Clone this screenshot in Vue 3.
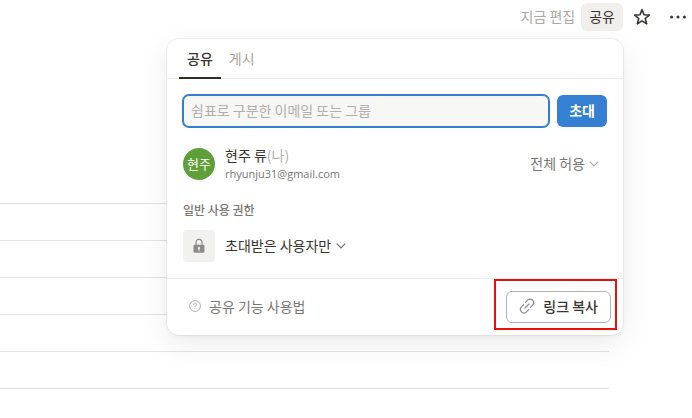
<template>
  <div class="page">
    <header class="topbar">
      <span class="edited">지금 편집</span>
      <button class="share-btn" type="button">공유</button>
      <button class="icon-btn star-btn" type="button" aria-label="즐겨찾기">
        <svg width="20" height="20" viewBox="0 0 20 20" fill="none" stroke="currentColor" stroke-width="1.6" stroke-linejoin="round">
          <path d="M10 2.6 L12 7.8 L17.4 8.1 L13.2 11.5 L14.7 16.8 L10 13.8 L5.3 16.8 L6.8 11.5 L2.6 8.1 L8 7.8 Z" />
        </svg>
      </button>
      <button class="icon-btn more-btn" type="button" aria-label="더 보기">
        <svg width="20" height="20" viewBox="0 0 20 20" fill="currentColor">
          <circle cx="3.6" cy="10" r="1.5" />
          <circle cx="10" cy="10" r="1.5" />
          <circle cx="16.4" cy="10" r="1.5" />
        </svg>
      </button>
    </header>

    <main class="rows">
      <div v-for="n in 6" :key="n" class="row"></div>
    </main>

    <section class="popover" role="dialog" aria-label="공유">
      <nav class="tabs">
        <button
          v-for="tab in tabs"
          :key="tab"
          type="button"
          class="tab"
          :class="{ active: tab === activeTab }"
          @click="activeTab = tab"
        >{{ tab }}</button>
      </nav>

      <div class="content">
        <form class="invite" @submit.prevent>
          <input
            v-model="emails"
            class="invite-input"
            type="text"
            aria-label="이메일 또는 그룹"
            placeholder="쉼표로 구분한 이메일 또는 그룹"
          />
          <button class="invite-btn" type="submit">초대</button>
        </form>

        <div class="member">
          <span class="avatar">현주</span>
          <div class="member-info">
            <span class="member-name">현주 류<span class="me">(나)</span></span>
            <span class="member-email">rhyunju31@gmail.com</span>
          </div>
          <button class="permission" type="button">
            전체 허용
            <svg class="chevron light" width="10" height="10" viewBox="0 0 10 10" fill="none" stroke="currentColor" stroke-width="1.2">
              <path d="M0.8 3.6 L5 7.8 L9.2 3.6" />
            </svg>
          </button>
        </div>

        <h2 class="section-title">일반 사용 권한</h2>
        <div class="access">
          <span class="lock">
            <svg width="14" height="16" viewBox="0 0 14 16">
              <path d="M4 7 V4.6 C4 2.4 5.2 1.4 7 1.4 C8.8 1.4 10 2.4 10 4.6 V7" fill="none" stroke="currentColor" stroke-width="1.2" />
              <rect x="1.5" y="6.8" width="11" height="8" rx="1.4" fill="currentColor" />
              <path d="M7 9.4 V12.2" stroke="#f1f1f0" stroke-width="1.2" stroke-linecap="round" />
              <circle cx="7" cy="10" r="1.1" fill="#f1f1f0" />
            </svg>
          </span>
          <button class="access-btn" type="button">
            초대받은 사용자만
            <svg class="chevron" width="10" height="10" viewBox="0 0 10 10" fill="none" stroke="currentColor" stroke-width="1.2">
              <path d="M0.8 3.6 L5 7.8 L9.2 3.6" />
            </svg>
          </button>
        </div>
      </div>

      <footer class="popover-footer">
        <a class="help" href="#">
          <svg width="12" height="12" viewBox="0 0 12 12" fill="none" stroke="currentColor">
            <circle cx="6" cy="6" r="5.4" stroke-width="1" />
            <path d="M4.4 4.8 C4.4 3.8 5.1 3.2 6 3.2 C6.9 3.2 7.6 3.8 7.6 4.6 C7.6 5.6 6 5.7 6 7" stroke-width="1" />
            <circle cx="6" cy="8.6" r="0.6" fill="currentColor" stroke="none" />
          </svg>
          공유 기능 사용법
        </a>
        <div class="copy">
          <button class="copy-btn" type="button">
            <svg width="16" height="16" viewBox="0 0 16 16" fill="none" stroke="currentColor" stroke-width="1.2" stroke-linecap="round">
              <path d="M6.4 4.4 L8.6 2.2 C10 0.8 12.2 0.8 13.6 2.2 C15 3.6 15 5.8 13.6 7.2 L11.4 9.4" />
              <path d="M9.6 11.6 L7.4 13.8 C6 15.2 3.8 15.2 2.4 13.8 C1 12.4 1 10.2 2.4 8.8 L4.6 6.6" />
              <path d="M6 10 L10 6" />
            </svg>
            링크 복사
          </button>
          <span class="highlight"></span>
        </div>
      </footer>
    </section>
  </div>
</template>

<script setup>
import { ref } from 'vue'

const tabs = ['공유', '게시']
const activeTab = ref('공유')
const emails = ref('')
</script>

<style>
body {
  background: #fff;
}
</style>

<style scoped>
.page {
  position: relative;
  min-height: 100vh;
  box-sizing: border-box;
  overflow: hidden;
  color: #37352f;
  font-family: "Noto Sans CJK KR", sans-serif;
  font-size: 14px;
  line-height: 20px;
}
button {
  box-sizing: border-box;
  padding: 0;
  border: 0;
  background: none;
  color: inherit;
  font: inherit;
  white-space: nowrap;
  cursor: pointer;
}
svg {
  flex: none;
}
.topbar {
  display: flex;
  align-items: center;
  justify-content: flex-end;
  height: 34px;
  padding-right: 4px;
}
.edited {
  margin-right: 6px;
  padding-bottom: 2px;
  color: #a9a8a5;
}
.share-btn {
  height: 28px;
  padding: 0 8px 2px;
  border-radius: 6px;
  background: #f0efee;
}
.icon-btn {
  display: flex;
}
.star-btn {
  margin-left: 9px;
}
.more-btn {
  margin-left: 16px;
}
.rows {
  margin: 133px 83px 0 0;
}
.row {
  height: 36px;
  border-bottom: 1px solid #e4e4e3;
}
.popover {
  position: absolute;
  top: 39px;
  right: 69px;
  width: 456px;
  max-width: calc(100% - 80px);
  border-radius: 12px;
  background: #fff;
  box-shadow: 0 0 0 1px rgba(15, 15, 15, 0.05), 0 3px 6px rgba(15, 15, 15, 0.03), 0 9px 30px rgba(15, 15, 15, 0.08);
}
.tabs {
  display: flex;
  height: 39px;
  padding: 0 12px;
  border-bottom: 1px solid #ededec;
}
.tab {
  height: 40px;
  padding: 0 8px;
  border-bottom: 2px solid transparent;
  color: #a5a4a1;
}
.tab.active {
  border-color: #2f2d2a;
  color: #37352f;
  font-weight: 500;
}
.content {
  padding: 16px;
}
.invite {
  display: flex;
  gap: 8px;
}
.invite-input {
  flex: 1;
  min-width: 0;
  height: 32px;
  box-sizing: border-box;
  padding: 0 7px 2px;
  border: 1px solid #327fd0;
  border-radius: 6px;
  outline: 0;
  background: #f7f7f5;
  box-shadow: 0 0 0 1px #327fd0;
  color: inherit;
  font: inherit;
}
.invite-input::placeholder {
  color: #b0afac;
  opacity: 1;
}
.invite-btn {
  height: 32px;
  padding: 0 12px 2px;
  border-radius: 6px;
  background: #3580d2;
  color: #fff;
  font-weight: 700;
}
.member {
  display: flex;
  align-items: center;
  gap: 10px;
  margin-top: 18px;
}
.avatar {
  display: flex;
  align-items: center;
  justify-content: center;
  width: 32px;
  height: 32px;
  border-radius: 50%;
  background: #5f9f37;
  color: #fff;
  font-size: 13px;
}
.member-info {
  display: flex;
  flex: 1;
  flex-direction: column;
}
.me {
  color: #b0afac;
}
.member-email {
  color: #787774;
  font-family: "Open Sans", "Noto Sans CJK KR", sans-serif;
  font-size: 11px;
  line-height: 18px;
}
.permission {
  display: flex;
  align-items: center;
  gap: 4px;
  margin-right: 8px;
  padding-bottom: 2px;
  color: #787774;
}
.chevron {
  color: #6f6e6b;
}
.chevron.light {
  color: #b0afac;
}
.section-title {
  margin: 19px 0 12px;
  color: #787774;
  font-size: 12px;
  font-weight: 500;
  line-height: 16px;
}
.access {
  display: flex;
  align-items: center;
  gap: 10px;
}
.lock {
  display: flex;
  align-items: center;
  justify-content: center;
  width: 32px;
  height: 32px;
  border-radius: 4px;
  background: #f1f1f0;
  color: #8c8b89;
}
.access-btn {
  display: flex;
  align-items: center;
  gap: 5px;
  padding-bottom: 2px;
}
.popover-footer {
  display: flex;
  align-items: center;
  justify-content: space-between;
  padding: 12px 12px 12px 22px;
  border-top: 1px solid #ededec;
}
.help {
  display: flex;
  align-items: center;
  gap: 8px;
  padding-bottom: 2px;
  color: #787774;
  text-decoration: none;
}
.help svg {
  color: #b0afac;
}
.copy {
  position: relative;
}
.copy-btn {
  display: flex;
  align-items: center;
  gap: 8px;
  height: 32px;
  padding: 0 12px 2px;
  border: 1px solid #b5b4b2;
  border-radius: 6px;
  font-weight: 500;
}
.copy-btn svg {
  color: #8c8b89;
}
.highlight {
  position: absolute;
  inset: -12px -6px -7px -12px;
  border: 2px solid #e61010;
  pointer-events: none;
}
</style>
